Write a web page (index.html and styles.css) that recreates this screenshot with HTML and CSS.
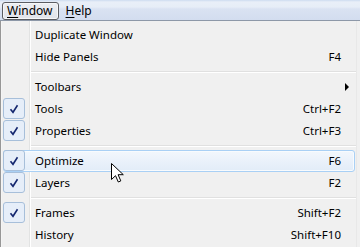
FILE: index.html
```html
<!DOCTYPE html>
<html>
<head>
<meta charset="utf-8">
<link rel="stylesheet" href="styles.css">
</head>
<body>
<div class="menubar">
  <div class="mb-item active"><u>W</u>indow</div>
  <div class="mb-item"><u>H</u>elp</div>
</div>
<div class="menu">
  <div class="row"><span class="icon"></span><span class="label">Duplicate Window</span><span class="key"></span><span class="sub"></span></div>
  <div class="row"><span class="icon"></span><span class="label">Hide Panels</span><span class="key">F4</span><span class="sub"></span></div>
  <div class="sep"></div>
  <div class="row"><span class="icon"></span><span class="label">Toolbars</span><span class="key"></span><span class="sub"><span class="arrow"></span></span></div>
  <div class="row"><span class="icon"><span class="check"><svg width="10" height="10" viewBox="0 0 10 10"><path d="M1.5 5.2 L4 8.3 L8.5 1.2" fill="none" stroke="#14266e" stroke-width="1.6"/></svg></span></span><span class="label">Tools</span><span class="key">Ctrl+F2</span><span class="sub"></span></div>
  <div class="row"><span class="icon"><span class="check"><svg width="10" height="10" viewBox="0 0 10 10"><path d="M1.5 5.2 L4 8.3 L8.5 1.2" fill="none" stroke="#14266e" stroke-width="1.6"/></svg></span></span><span class="label">Properties</span><span class="key">Ctrl+F3</span><span class="sub"></span></div>
  <div class="sep"></div>
  <div class="row hover"><span class="icon"><span class="check"><svg width="10" height="10" viewBox="0 0 10 10"><path d="M1.5 5.2 L4 8.3 L8.5 1.2" fill="none" stroke="#14266e" stroke-width="1.6"/></svg></span></span><span class="label">Optimize</span><span class="key">F6</span><span class="sub"></span></div>
  <div class="row"><span class="icon"><span class="check"><svg width="10" height="10" viewBox="0 0 10 10"><path d="M1.5 5.2 L4 8.3 L8.5 1.2" fill="none" stroke="#14266e" stroke-width="1.6"/></svg></span></span><span class="label">Layers</span><span class="key">F2</span><span class="sub"></span></div>
  <div class="sep"></div>
  <div class="row"><span class="icon"><span class="check"><svg width="10" height="10" viewBox="0 0 10 10"><path d="M1.5 5.2 L4 8.3 L8.5 1.2" fill="none" stroke="#14266e" stroke-width="1.6"/></svg></span></span><span class="label">Frames</span><span class="key">Shift+F2</span><span class="sub"></span></div>
  <div class="row"><span class="icon"></span><span class="label">History</span><span class="key">Shift+F10</span><span class="sub"></span></div>
  <svg class="cursor" width="13" height="20" viewBox="0 0 13 20"><path d="M0.5 0.5 L0.5 16.5 L4.5 12.7 L7.3 19 L9.8 17.9 L7.1 11.7 L12.3 11.7 Z" fill="#fff" stroke="#000" stroke-width="1" stroke-linejoin="miter"/></svg>
</div>
</body>
</html>
```
FILE: styles.css
```css
html, body { margin: 0; padding: 0; background: #f0f0f0; }
body {
  width: 360px; height: 247px; overflow: hidden;
  font-family: "Noto Sans", "Open Sans", sans-serif;
  font-size: 11.5px; color: #000;
}
.menubar {
  height: 21px;
  box-sizing: border-box;
  display: flex;
  align-items: flex-start;
  padding: 2px 0 0 2px;
  gap: 2px;
  background: linear-gradient(#cddcf0 0, #e9eff8 2px, #e6edf7 7px, #d9e2f2 9px, #d3ddef 100%);
  border-bottom: 1px solid #8d98a8;
}
.mb-item {
  height: 18px;
  box-sizing: border-box;
  padding: 0 4px;
  line-height: 16px;
  border: 1px solid transparent;
  border-radius: 3px;
  font-size: 12px;
}
.mb-item.active {
  border-color: #5b5d63;
  background: linear-gradient(#eceef2, #e1e4ea);
  box-shadow: inset 0 0 0 1px #f6f7f9;
  padding: 0 5px 0 4px;
}
.mb-item u { text-decoration: underline; text-underline-offset: 2px; }
.menu {
  position: relative;
  background: #f0f0f0;
  border-left: 1px solid #979797;
  box-shadow: inset 1px 0 0 #f5f5f5;
  padding: 3px 0 0 0;
  margin-right: 3px;
  border-right: 1px solid #e8e8e8;
  height: 224px;
  background-image: linear-gradient(90deg, transparent 28px, #e2e3e3 28px, #e2e3e3 29px, #ffffff 29px, #ffffff 30px, transparent 30px);
}
.row {
  position: relative;
  height: 22px;
  display: grid;
  grid-template-columns: 34px 1fr auto 14px;
  align-items: center;
}
.row.hover::before {
  content: "";
  position: absolute;
  left: 2px; right: 1px; top: 0; bottom: 0;
  border: 1px solid #a9d0f5;
  border-radius: 3px;
  background: linear-gradient(#f2f7fd, #e2ecf8);
  box-shadow: inset 0 0 0 1px #f8fbfe;
}
.icon { position: relative; height: 22px; }
.check {
  position: absolute;
  left: 2px; top: 0;
  width: 22px; height: 21px;
  box-sizing: border-box;
  border: 1px solid #a7bfda;
  border-radius: 3px;
  background: #e6eef9;
  display: flex; align-items: center; justify-content: center;
}
.label, .key { position: relative; white-space: nowrap; line-height: 22px; }
.key { text-align: right; padding-right: 1px; }
.sub { position: relative; height: 22px; }
.arrow {
  position: absolute; left: 3px; top: 7px;
  width: 0; height: 0;
  border-left: 4px solid #000;
  border-top: 4px solid transparent;
  border-bottom: 4px solid transparent;
}
.sep {
  height: 8px;
  margin-left: 30px;
  background: linear-gradient(transparent 3px, #e0e0e0 3px, #e0e0e0 4px, #ffffff 4px, #ffffff 5px, transparent 5px);
}
.cursor { position: absolute; left: 110px; top: 142px; }
```
